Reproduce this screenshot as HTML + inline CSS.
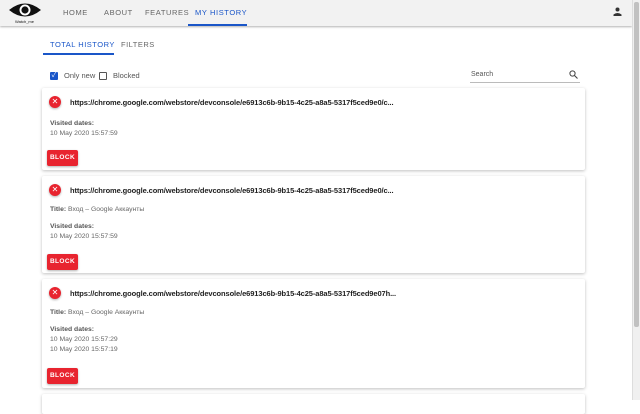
<!DOCTYPE html>
<html><head><meta charset="utf-8"><style>
*{box-sizing:border-box;margin:0;padding:0}
body{width:640px;height:400px;overflow:hidden;background:#fff;font-family:"Liberation Sans","Noto Sans CJK SC",sans-serif;position:relative}
.hdr{position:absolute;left:0;top:0;width:632px;height:26px;background:#f2f2f2;box-shadow:0 1px 2px rgba(0,0,0,.3)}
.nav{position:absolute;top:8px;font-size:7.5px;letter-spacing:.6px;color:#666}
.sb{position:absolute;right:0;top:0;width:8px;height:400px;background:#f0f0f0;border-left:1px solid #ddd}
.sb div{position:absolute;left:1px;top:2px;width:5px;height:325px;background:#c1c1c1;border-radius:2px}
.tab{position:absolute;top:40px;font-size:7.5px;letter-spacing:.5px;color:#666}
.card{position:absolute;left:42px;width:543px;background:#fff;box-shadow:0 1px 3px rgba(0,0,0,.25);border-radius:2px}
.x{position:absolute;left:7px;top:8px;width:12px;height:12px;border-radius:50%;background:#e8242f;color:#fff;font-size:8px;line-height:12px;text-align:center;box-shadow:0 1px 2px rgba(0,0,0,.3)}
.url{position:absolute;left:28px;top:10px;font-size:7.5px;color:#222;font-weight:bold;letter-spacing:-.1px}
.t{position:absolute;left:8px;font-size:6.8px;color:#666}
.t b{color:#555}
.btn{position:absolute;left:5px;width:31px;height:16px;background:#e8242f;color:#fff;font-size:6.5px;font-weight:bold;letter-spacing:.4px;text-align:center;line-height:16px;border-radius:2px;box-shadow:0 1px 2px rgba(0,0,0,.3)}
</style></head><body>
<div class="hdr">
<svg style="position:absolute;left:8px;top:1px" width="34" height="18" viewBox="0 0 34 18"><path d="M1 9Q17 -4 33 9Q17 22 1 9Z" fill="#111"/><circle cx="17" cy="9" r="5.5" fill="#fff"/><circle cx="17" cy="9" r="3.6" fill="#111"/></svg>
<div style="position:absolute;left:15px;top:19px;font-size:4px;color:#111">Watch_me</div>
<div class="nav" style="left:63px">HOME</div>
<div class="nav" style="left:104px">ABOUT</div>
<div class="nav" style="left:145px">FEATURES</div>
<div class="nav" style="left:195px;color:#1a56c8">MY HISTORY</div>
<div style="position:absolute;left:188px;top:24px;width:59px;height:2px;background:#1a56c8"></div>
<svg style="position:absolute;left:613px;top:7px" width="9" height="9" viewBox="0 0 9 9"><circle cx="4.5" cy="2.5" r="2" fill="#333"/><path d="M0.5 9V7.5Q4.5 4.5 8.5 7.5V9Z" fill="#333"/></svg>
</div>
<div class="tab" style="left:50px;color:#1a56c8">TOTAL HISTORY</div>
<div class="tab" style="left:121px">FILTERS</div>
<div style="position:absolute;left:43px;top:53px;width:71px;height:2px;background:#1a56c8"></div>
<div style="position:absolute;left:50px;top:72px;width:8px;height:8px;background:#1a56c8;border-radius:1px;color:#fff;font-size:7px;line-height:8px;text-align:center">✓</div>
<div style="position:absolute;left:64px;top:71px;font-size:7.5px;color:#555">Only new</div>
<div style="position:absolute;left:99px;top:72px;width:8px;height:8px;border:1px solid #555;border-radius:1px"></div>
<div style="position:absolute;left:113px;top:71px;font-size:7.5px;color:#555">Blocked</div>
<div style="position:absolute;left:471px;top:71px;font-size:7px;color:#555">Search</div>
<svg style="position:absolute;left:569px;top:70px" width="9" height="9" viewBox="0 0 9 9"><circle cx="3.5" cy="3.5" r="2.6" fill="none" stroke="#444" stroke-width="1"/><path d="M5.5 5.5L8.5 8.5" stroke="#444" stroke-width="1.1"/></svg>
<div style="position:absolute;left:470px;top:82px;width:110px;height:1px;background:#bbb"></div>

<div class="card" style="top:88px;height:82px">
<div class="x">✕</div><div class="url">https://chrome.google.com/webstore/devconsole/e6913c6b-9b15-4c25-a8a5-5317f5ced9e0/c...</div>
<div class="t" style="top:32px"><b>Visited dates:</b></div>
<div class="t" style="top:42px">10 May 2020 15:57:59</div>
<div class="btn" style="top:62px">BLOCK</div>
</div>
<div class="card" style="top:176px;height:97px">
<div class="x">✕</div><div class="url">https://chrome.google.com/webstore/devconsole/e6913c6b-9b15-4c25-a8a5-5317f5ced9e0/c...</div>
<div class="t" style="top:30px"><b>Title:</b> Вход – Google Аккаунты</div>
<div class="t" style="top:47px"><b>Visited dates:</b></div>
<div class="t" style="top:57px">10 May 2020 15:57:59</div>
<div class="btn" style="top:78px">BLOCK</div>
</div>
<div class="card" style="top:279px;height:109px">
<div class="x">✕</div><div class="url">https://chrome.google.com/webstore/devconsole/e6913c6b-9b15-4c25-a8a5-5317f5ced9e07h...</div>
<div class="t" style="top:30px"><b>Title:</b> Вход – Google Аккаунты</div>
<div class="t" style="top:47px"><b>Visited dates:</b></div>
<div class="t" style="top:57px">10 May 2020 15:57:29</div>
<div class="t" style="top:67px">10 May 2020 15:57:19</div>
<div class="btn" style="top:89px">BLOCK</div>
</div>
<div class="card" style="top:394px;height:20px"></div>
<div class="sb"><div></div></div>
</body></html>
